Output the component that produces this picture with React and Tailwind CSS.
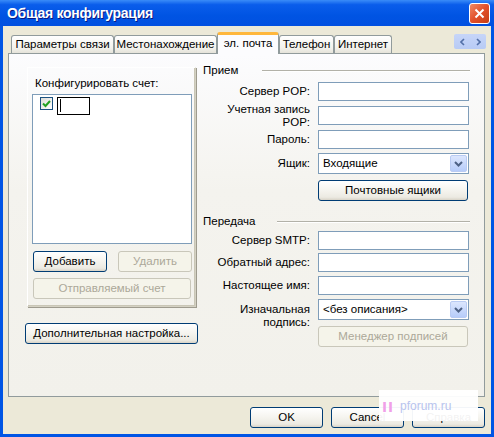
import React from "react";

const BTN =
  "h-[21px] rounded-[3px] border border-[#003C74] bg-[linear-gradient(to_bottom,#FFFFFF_0%,#F6F5F0_45%,#ECEAE2_85%,#D8D3C7_100%)] text-black flex items-center justify-center";
const BTN_OFF =
  "h-[21px] rounded-[3px] border border-[#C9C7BA] bg-[#F5F4EA] text-[#ACA899] flex items-center justify-center";
const INPUT = "h-[19px] w-[151px] border border-[#7F9DB9] bg-white";

const TABS = [
  { label: "Параметры связи", w: "w-[103px]" },
  { label: "Местонахождение", w: "w-[103px]" },
  { label: "эл. почта", w: "w-[62px]", active: true },
  { label: "Телефон", w: "w-[55px]" },
  { label: "Интернет", w: "w-[58px]" },
];

function Combo({ value }) {
  return (
    <div className="h-[21px] w-[151px] border border-[#7F9DB9] bg-white flex items-center">
      <span className="flex-1 pl-[4px]">{value}</span>
      <span className="w-[17px] h-[17px] mr-px rounded-[2px] border border-[#B9CBF3] bg-[linear-gradient(to_bottom,#DCE6FD,#B6CCFA)] flex items-center justify-center">
        <svg width="9" height="6" viewBox="0 0 9 6">
          <path d="M1 1 L4.5 4.5 L8 1" stroke="#4D6185" strokeWidth="2" fill="none" />
        </svg>
      </span>
    </div>
  );
}

function Row({ label, children, className = "", h = "h-[19px]", top }) {
  return (
    <div className={`flex gap-[8px] ${top ? "items-start" : "items-center"} ${h} ${className}`}>
      <div className={`w-[107px] shrink-0 text-right leading-[13px] ${top ? "mt-[4px]" : ""}`}>
        {label}
      </div>
      {children}
    </div>
  );
}

function Header({ text, gap }) {
  return (
    <div className={`flex items-center h-[14px] ${gap}`}>
      <span>{text}</span>
      <div className="flex-1 h-[2px] border-t border-[#B2B1A8] border-b border-b-white" />
    </div>
  );
}

export default function App() {
  return (
    <div className="relative w-[494px] h-[437px] bg-[#0055E5] flex flex-col font-['Liberation_Sans',Arial,sans-serif] text-[11.5px] text-black overflow-hidden">
      {/* title bar */}
      <div className="h-[26px] flex items-center justify-between pl-[7px] pr-[4px] bg-[linear-gradient(to_bottom,#3A8CF8_0%,#0A5DEB_18%,#0054E3_60%,#0150E0_100%)]">
        <span className="text-white font-bold text-[14px] tracking-[-0.3px] [text-shadow:1px_1px_#0A1883]">
          Общая конфигурация
        </span>
        <div className="w-[21px] h-[21px] rounded-[3px] border border-white bg-[linear-gradient(135deg,#F08A66,#E2502A_50%,#C63D14)] flex items-center justify-center">
          <svg width="11" height="11" viewBox="0 0 11 11">
            <path d="M1.5 1.5 L9.5 9.5 M9.5 1.5 L1.5 9.5" stroke="white" strokeWidth="2" />
          </svg>
        </div>
      </div>

      {/* body */}
      <div className="flex-1 mx-[3px] mb-[3px] bg-[#ECE9D8] pt-[6px] pl-[5px] pr-[6px] pb-[6px] flex flex-col">
        {/* tabs */}
        <div className="relative z-10 h-[22px] -mb-px flex items-end pl-[3px]">
          {TABS.map((t) =>
            t.active ? (
              <div
                key={t.label}
                className={`${t.w} h-[22px] rounded-t-[3px] border-x border-[#919B9C] border-t-[3px] border-t-[#FFB73C] bg-[#FCFCFE] flex items-center justify-center pb-[2px]`}
              >
                {t.label}
              </div>
            ) : (
              <div
                key={t.label}
                className={`${t.w} h-[18px] mb-px rounded-t-[3px] border border-b-0 border-[#919B9C] bg-[linear-gradient(to_bottom,#FFFFFF,#F3F2EC_70%,#E5E3DA)] flex items-center justify-center`}
              >
                {t.label}
              </div>
            )
          )}
          <div className="ml-auto self-start mt-[2px] -mr-px w-[32px] h-[15px] flex bg-[linear-gradient(to_bottom,#C6D5F8,#B8CBF5)] rounded-[2px]">
            <div className="flex-1 flex items-center justify-center">
              <svg width="5" height="8" viewBox="0 0 5 8">
                <path d="M4 1 L1 4 L4 7" stroke="#5370A8" strokeWidth="1.6" fill="none" />
              </svg>
            </div>
            <div className="flex-1 flex items-center justify-center">
              <svg width="5" height="8" viewBox="0 0 5 8">
                <path d="M1 1 L4 4 L1 7" stroke="#5370A8" strokeWidth="1.6" fill="none" />
              </svg>
            </div>
          </div>
        </div>

        {/* panel */}
        <div className="h-[344px] border border-[#919B9C] bg-[linear-gradient(to_bottom,#FCFCFE,#F4F3EE_40%,#F2F1EB)] pt-[10px] pl-[16px] flex gap-[5px]">
          {/* left column */}
          <div className="w-[173px] flex flex-col">
            <div className="mt-[3px] ml-[2px] w-[169px] border border-[#D4D1C3] border-l-white border-t-white shadow-[1px_1px_0_#9E9B8E,inset_-1px_-1px_0_#C9C6B6] pt-[8px] pl-[4px] pr-[3px] pb-[7px] flex flex-col">
              <div className="leading-[15px] pl-[3px]">Конфигурировать счет:</div>
              <div className="mt-[3px] h-[150px] border border-[#7F9DB9] bg-white pt-[1px] pl-[7px] flex items-start gap-[4px]">
                <div className="mt-px w-[13px] h-[13px] border border-[#1C5180] bg-[linear-gradient(135deg,#DCDCD7,#FFFFFF)] flex items-center justify-center">
                  <svg width="9" height="9" viewBox="0 0 9 9">
                    <path d="M1 4.5 L3.5 7 L8 2" stroke="#21A121" strokeWidth="2" fill="none" />
                  </svg>
                </div>
                <div className="mt-px w-[33px] h-[18px] border border-black bg-white pl-[2px] pt-[1px]">
                  <div className="w-px h-[13px] bg-black" />
                </div>
              </div>
              <div className="mt-[7px] flex justify-between pl-px">
                <div className={`${BTN} w-[74px]`}>Добавить</div>
                <div className={`${BTN_OFF} w-[74px]`}>Удалить</div>
              </div>
              <div className={`${BTN_OFF} mt-[6px] ml-px w-[158px]`}>Отправляемый счет</div>
            </div>
            <div className={`${BTN} mt-[16px] w-[173px]`}>Дополнительная настройка...</div>
          </div>

          {/* right column */}
          <div className="w-[267px] flex flex-col">
            <Header text="Прием" gap="gap-[24px]" />
            <Row label="Сервер POP:" className="mt-[4px]">
              <div className={INPUT} />
            </Row>
            <Row
              label={
                <>
                  Учетная запись
                  <br />
                  POP:
                </>
              }
              className="mt-[5px]"
            >
              <div className={INPUT} />
            </Row>
            <Row label="Пароль:" className="mt-[5px]">
              <div className={INPUT} />
            </Row>
            <Row label="Ящик:" className="mt-[4px]" h="h-[21px]">
              <Combo value="Входящие" />
            </Row>
            <Row label="" className="mt-[6px]" h="h-[21px]">
              <div className={`${BTN} w-[150px]`}>Почтовные ящики</div>
            </Row>

            <div className="mt-[14px]">
              <Header text="Передача" gap="gap-[22px]" />
            </div>
            <Row label="Сервер SMTP:" className="mt-[2px]">
              <div className={INPUT} />
            </Row>
            <Row label="Обратный адрес:" className="mt-[3px]">
              <div className={INPUT} />
            </Row>
            <Row label="Настоящее имя:" className="mt-[4px]">
              <div className={INPUT} />
            </Row>
            <Row
              label={
                <>
                  Изначальная
                  <br />
                  подпись:
                </>
              }
              className="mt-[4px]"
              h="h-[21px]"
              top
            >
              <Combo value="<без описания>" />
            </Row>
            <Row label="" className="mt-[6px]" h="h-[21px]">
              <div className={`${BTN_OFF} w-[150px]`}>Менеджер подписей</div>
            </Row>
          </div>
        </div>

        {/* dialog buttons */}
        <div className="mt-[10px] flex justify-end gap-[8px]">
          <div className={`${BTN} w-[73px]`}>OK</div>
          <div className={`${BTN} w-[73px]`}>Cancel</div>
          <div className={`${BTN} w-[73px]`}>Справка</div>
        </div>
      </div>

      {/* watermark */}
      <div className="absolute left-[379px] top-[390px] w-[99px] h-[31px] bg-white/95 flex items-center pl-[3px] gap-[6px]">
        <span className="text-[18px] font-bold leading-none text-[#F0A0E8] tracking-[1px]">ıı</span>
        <span className="text-[12px] text-[#B8C4EE]">pforum.ru</span>
      </div>
    </div>
  );
}
